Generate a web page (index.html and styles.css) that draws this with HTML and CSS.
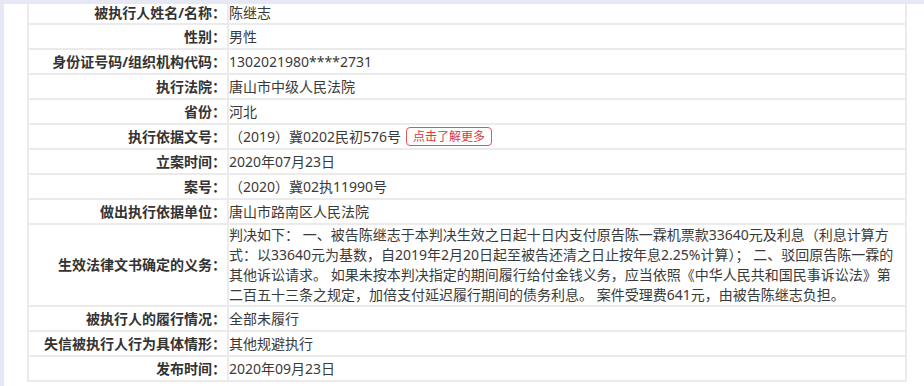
FILE: index.html
```html
<!DOCTYPE html>
<html lang="zh-CN">
<head>
<meta charset="utf-8">
<title>失信被执行人详情</title>
<link rel="stylesheet" href="styles.css">
</head>
<body>
<div class="frame">
  <div class="panel">
    <table class="info">
      <tbody>
        <tr class="first"><th>被执行人姓名/名称：</th><td>陈继志</td></tr>
        <tr><th>性别：</th><td>男性</td></tr>
        <tr><th>身份证号码/组织机构代码：</th><td>1302021980****2731</td></tr>
        <tr><th>执行法院：</th><td>唐山市中级人民法院</td></tr>
        <tr><th>省份：</th><td>河北</td></tr>
        <tr><th>执行依据文号：</th><td>（2019）冀0202民初576号<span class="more">点击了解更多</span></td></tr>
        <tr><th>立案时间：</th><td>2020年07月23日</td></tr>
        <tr><th>案号：</th><td>（2020）冀02执11990号</td></tr>
        <tr><th>做出执行依据单位：</th><td>唐山市路南区人民法院</td></tr>
        <tr><th>生效法律文书确定的义务：</th><td class="long">判决如下： 一、被告陈继志于本判决生效之日起十日内支付原告陈一霖机票款33640元及利息（利息计算方<br>式：以33640元为基数，自2019年2月20日起至被告还清之日止按年息2.25%计算）； 二、驳回原告陈一霖的<br>其他诉讼请求。 如果未按本判决指定的期间履行给付金钱义务，应当依照《中华人民共和国民事诉讼法》第<br>二百五十三条之规定，加倍支付延迟履行期间的债务利息。 案件受理费641元，由被告陈继志负担。</td></tr>
        <tr><th>被执行人的履行情况：</th><td>全部未履行</td></tr>
        <tr><th>失信被执行人行为具体情形：</th><td>其他规避执行</td></tr>
        <tr><th>发布时间：</th><td>2020年09月23日</td></tr>
      </tbody>
    </table>
  </div>
</div>
</body>
</html>
```

FILE: styles.css
```css
html, body {
  margin: 0;
  padding: 0;
}
body {
  background: #e6e8f6;
  font-family: "Noto Sans", "Noto Sans CJK SC", sans-serif;
  font-size: 14px;
  color: #333;
}
.frame {
  padding: 4px 0 0 4px;
  height: 382px;
}
.panel {
  background: #fff;
  height: 382px;
  overflow: hidden;
  padding-left: 23px;
}
.info {
  border-collapse: separate;
  border-spacing: 2px;
  background: #ebebeb;
  margin-top: -2px;
  width: 880px;
  table-layout: fixed;
}
.info th,
.info td {
  background: #fff;
  height: 23px;
  line-height: 20px;
  padding: 0;
  vertical-align: middle;
  white-space: nowrap;
}
.info .first th,
.info .first td {
  height: 17px;
  line-height: 17px;
  padding-bottom: 2px;
}
.info th {
  width: 197px;
  text-align: right;
  font-weight: bold;
  color: #333;
  padding-right: 1px;
}
.info td {
  text-align: left;
  color: #3a3a3a;
}
.more {
  display: inline-block;
  margin-left: 5px;
  padding: 0 6px;
  border: 1px solid #e0555a;
  border-radius: 4px;
  color: #d8393f;
  font-size: 12px;
  line-height: 17px;
  vertical-align: 1px;
}
```
